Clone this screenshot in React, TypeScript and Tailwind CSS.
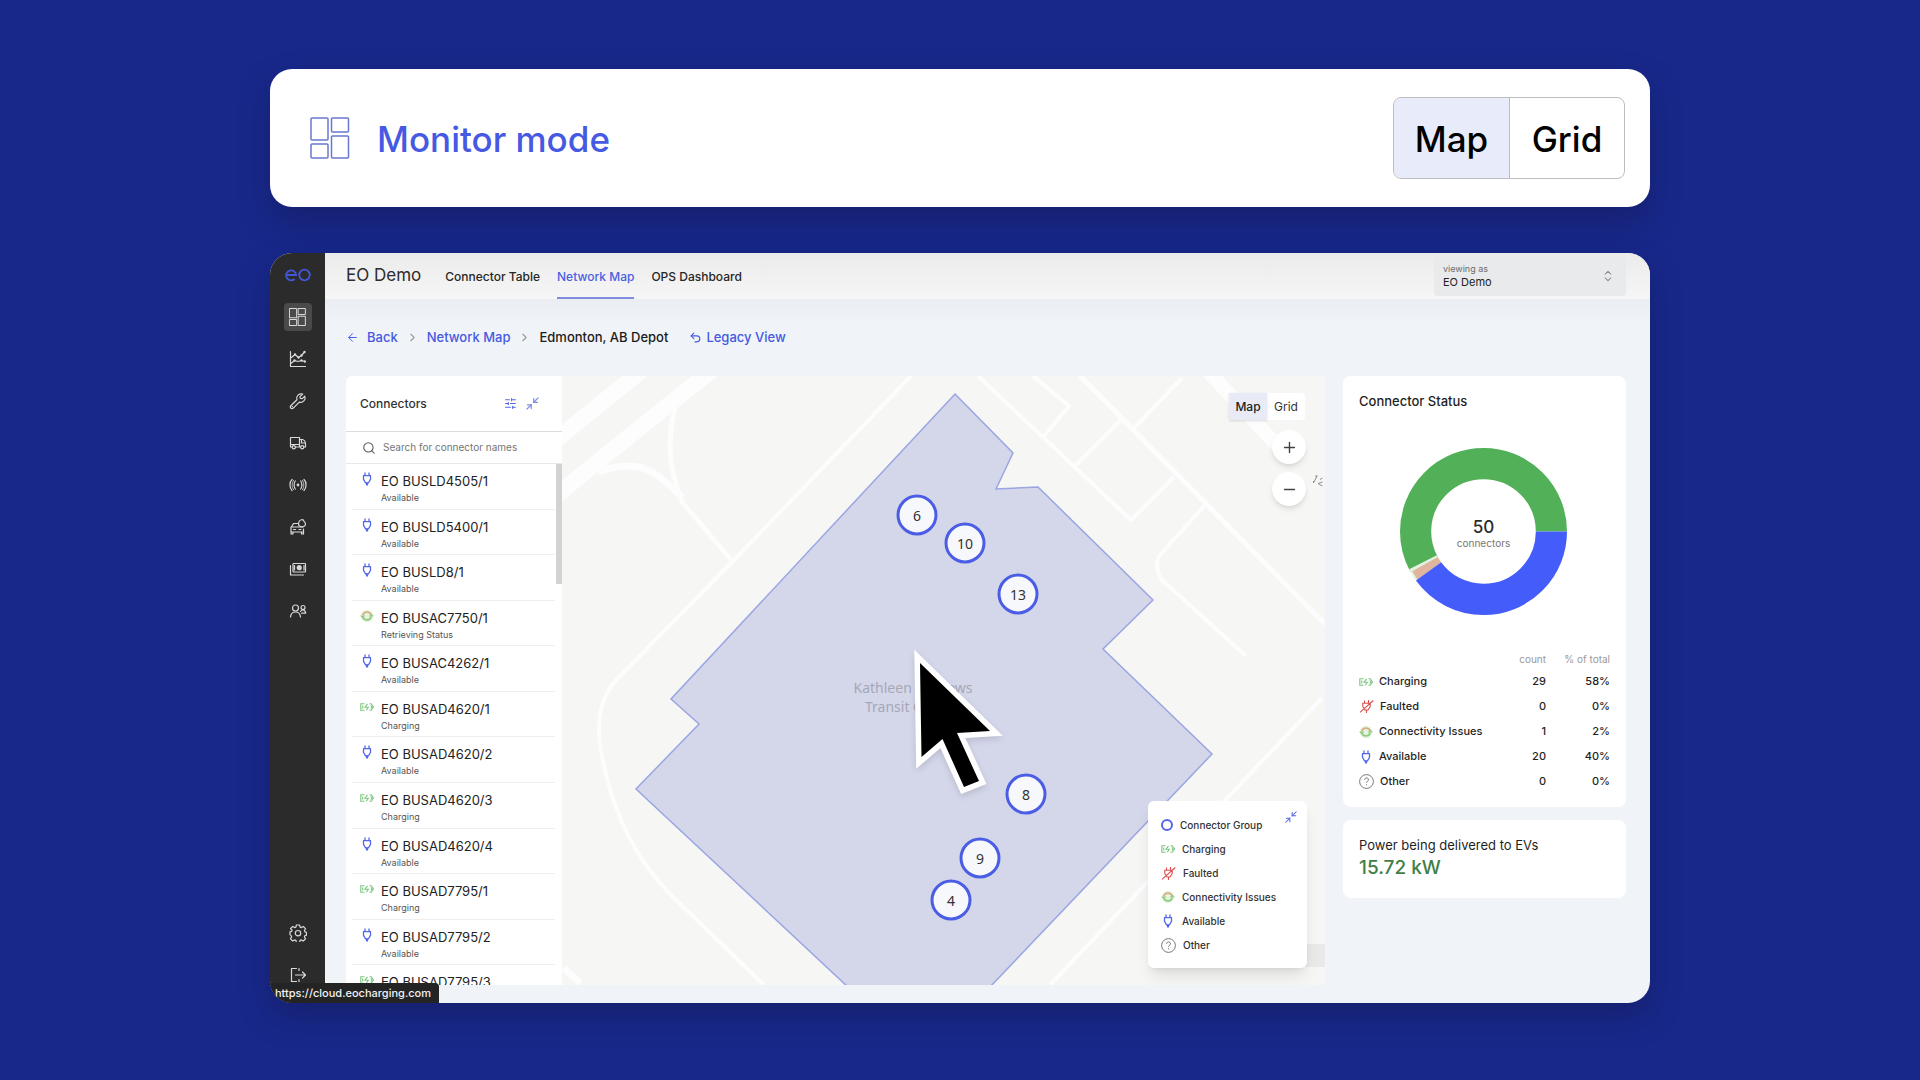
import type { ReactNode } from 'react';
import { ArrowLeft, ChevronRight, ChevronsUpDown, Minimize2, Minus, Plus, Search, SlidersHorizontal, Undo2 } from 'lucide-react';

type Status = 'charging' | 'faulted' | 'connectivity' | 'available' | 'other';

const connectors: { name: string; status: Status; label: string }[] = [
	{ name: 'EO BUSLD4505/1', status: 'available', label: 'Available' },
	{ name: 'EO BUSLD5400/1', status: 'available', label: 'Available' },
	{ name: 'EO BUSLD8/1', status: 'available', label: 'Available' },
	{ name: 'EO BUSAC7750/1', status: 'connectivity', label: 'Retrieving Status' },
	{ name: 'EO BUSAC4262/1', status: 'available', label: 'Available' },
	{ name: 'EO BUSAD4620/1', status: 'charging', label: 'Charging' },
	{ name: 'EO BUSAD4620/2', status: 'available', label: 'Available' },
	{ name: 'EO BUSAD4620/3', status: 'charging', label: 'Charging' },
	{ name: 'EO BUSAD4620/4', status: 'available', label: 'Available' },
	{ name: 'EO BUSAD7795/1', status: 'charging', label: 'Charging' },
	{ name: 'EO BUSAD7795/2', status: 'available', label: 'Available' },
	{ name: 'EO BUSAD7795/3', status: 'charging', label: '' },
];

const totals: { status: Status; label: string; count: number; share: string }[] = [
	{ status: 'charging', label: 'Charging', count: 29, share: '58%' },
	{ status: 'faulted', label: 'Faulted', count: 0, share: '0%' },
	{ status: 'connectivity', label: 'Connectivity Issues', count: 1, share: '2%' },
	{ status: 'available', label: 'Available', count: 20, share: '40%' },
	{ status: 'other', label: 'Other', count: 0, share: '0%' },
];

// pin centres on the map canvas
const groups = [
	{ count: 6, x: 355, y: 139 },
	{ count: 10, x: 403, y: 167 },
	{ count: 13, x: 456, y: 218 },
	{ count: 8, x: 464, y: 418 },
	{ count: 9, x: 418, y: 482 },
	{ count: 4, x: 389, y: 524 },
];

const DashboardIcon = ({ className, strokeWidth = 2 }: { className?: string; strokeWidth?: number }) => (
	<svg className={className} viewBox="0 0 40 42" fill="none" stroke="currentColor" strokeWidth={strokeWidth} aria-hidden="true">
		<rect x="1" y="1" width="17" height="22" rx="1" />
		<rect x="21.5" y="1" width="17" height="14" rx="1" />
		<rect x="1" y="27" width="17" height="14" rx="1" />
		<rect x="21.5" y="19" width="17" height="22" rx="1" />
	</svg>
);

const NavIcon = ({ children }: { children: ReactNode }) => (
	<svg className="size-[18px]" viewBox="0 0 18 18" fill="none" stroke="currentColor" strokeWidth="1.2" strokeLinecap="round" strokeLinejoin="round" aria-hidden="true">
		{children}
	</svg>
);

const ChartIcon = () => (
	<NavIcon>
		<path d="M1.5 1.5v15h15" />
		<path d="M2.5 7.5 6 4.5l3.5 3 3-2 3-3.5M2.5 13l3-2.5 3.5 1 3.5-1 3.5 1" />
		<path d="M15.5 2h.01M6 4.5h.01M9.5 7.5h.01M12.5 5.5h.01M5.5 10.5h.01M12.5 10.5h.01M15.8 11.5h.01" strokeWidth="2.4" />
	</NavIcon>
);

const WrenchIcon = () => (
	<NavIcon>
		<path d="M15.8 4.2 13.2 6.6 11.3 6.3 11 4.6 13.7 2.1A4.5 4.5 0 0 0 7.900 7.700L1.800 13.700a1.700 1.700 0 0 0 2.500 2.500L10.300 10.100A4.500 4.500 0 0 0 15.800 4.200Z" />
		<path d="M3.300 14.700h.01" strokeWidth="1.500" />
	</NavIcon>
);

const VanIcon = () => (
	<NavIcon>
		<path d="M3 13H1.500V3.500h9V13H6.500M10.500 5.500h3c2 .5 3 3 3 4.500v3H15M11.500 13h-1M12.500 5.800V9h3.700M1.500 10.500h9" />
		<circle cx="4.800" cy="13.200" r="1.600" />
		<circle cx="13.200" cy="13.200" r="1.600" />
	</NavIcon>
);

const BroadcastIcon = () => (
	<NavIcon>
		<path d="M3 3.500C.3 6 .3 12 3 14.500M6.300 5c-1.600 2-1.600 6 0 8M15 3.500c2.700 2.500 2.700 8.500 0 11M11.700 5c1.600 2 1.600 6 0 8" />
		<path d="M4.600 4.300c-1.900 2.500-1.900 7 0 9.400M13.400 4.300c1.900 2.500 1.900 7 0 9.400" strokeWidth=".8" />
		<circle cx="9" cy="9" r=".8" fill="currentColor" />
	</NavIcon>
);

const EcoCarIcon = () => (
	<NavIcon>
		<path d="M8.500 5.500H4.500L2.500 9H13.500M2 9v6.500M2 14h12.500V11M2 16h2v-2M12.500 14v2h2v-2M4.500 11.500h2M10 11.500h2" />
		<path d="M9.800 7.500c-1-4 1-6 4.200-6 .3 2 2.500 2.500 2.500 4.500 0 2.500-3.500 4-6.700 1.500Z" />
	</NavIcon>
);

const MoneyIcon = () => (
	<NavIcon>
		<path d="M1.500 5.500v9.500h13" />
		<rect x="4" y="3.500" width="12.500" height="8.500" rx=".5" />
		<path d="M5.500 5.500v4.500M15 5.500v4.500" />
		<circle cx="10.200" cy="7.700" r="2" fill="currentColor" />
	</NavIcon>
);

const PeopleIcon = () => (
	<NavIcon>
		<circle cx="6.500" cy="6" r="3" />
		<path d="M1.500 15c.3-3 2-5 5-5s4.700 2 5 5" />
		<circle cx="14" cy="5.500" r="2" />
		<path d="M11.500 9.500c.7-1.200 1.500-1.500 2.500-1.500 1.700 0 2.500 1.200 2.700 3.200h-4" />
	</NavIcon>
);

const GearIcon = () => (
	<NavIcon>
		<path d="M7.400 1h3.200l.5 2.100 1.300.5 1.900-1.100 2.200 2.200-1.100 1.900.5 1.300 1.600.5v2.700l-1.600.5-.5 1.300 1.100 1.900-2.200 2.200-1.900-1.100-1.300.5-.5 2.100H7.400l-.5-2.100-1.300-.5-1.900 1.100-2.200-2.200 1.100-1.900-.5-1.300L1 10.600V7.900l1.600-.5.500-1.300L1.500 4.700l2.200-2.200 1.900 1.100 1.300-.5Z" />
		<circle cx="9" cy="9.200" r="2.700" />
	</NavIcon>
);

const LogoutIcon = () => (
	<NavIcon>
		<path d="M7.500 2.500H2.500v13h5M10 2.500v2M10 13.500v2M6.500 9h10M13.500 6l3 3-3 3" />
	</NavIcon>
);

const StatusIcon = ({ status }: { status: Status }) => {
	switch (status) {
		case 'charging':
			return (
				<svg className="h-[14px] w-[14px] shrink-0" viewBox="0 0 14 14" fill="none" stroke="#7cc681" strokeWidth="1.1" aria-hidden="true">
					<path d="M4.500 3.800H.8v6.400H4.500M9.500 3.800h1.700L13.500 7l-2.300 3.200H9.500M2.700 5.500v3M10.800 5.500 12 7l-1.200 1.500" />
					<path d="M7.500 3.800 5 7.200h3.400L6.300 10.300" />
				</svg>
			);
		case 'faulted':
			return (
				<svg className="h-[15px] w-[15px] shrink-0" viewBox="0 0 15 15" fill="none" stroke="#d9504c" strokeWidth="1.1" aria-hidden="true">
					<path d="M5.500 1.500v2.500M9.500 1v3M3.800 4.200h7.400v3.300L9 11H6L3.800 7.500ZM7.500 11v3M14.300 1.500 1 13.300" />
				</svg>
			);
		case 'connectivity':
			return (
				<svg className="h-[14px] w-[14px] shrink-0" viewBox="0 0 14 14" fill="none" strokeWidth="1.7" aria-hidden="true">
					<circle cx="7" cy="7" r="6.300" fill="#e6f4de" />
					<path d="M2.800 6.500A4.300 4.300 0 0 1 11.200 6.500" stroke="#d3b184" />
					<path d="M11.200 7.500A4.300 4.300 0 0 1 2.800 7.500" stroke="#8fcb82" />
					<path d="M.8 6.500 2.600 8.400 4.600 6.500M13.200 7.500 11.400 5.600 9.400 7.500" stroke="#8fcb82" strokeWidth="1.100" />
				</svg>
			);
		case 'available':
			return (
				<svg className="h-[14px] w-[14px] shrink-0" viewBox="0 0 14 14" fill="none" stroke="#5468e8" strokeWidth="1.300" aria-hidden="true">
					<path d="M5 .5v3M9 .5v3M3 3.700h8M3.500 3.700v3.600L5.500 10.800h3L10.500 7.300V3.700" />
					<path d="M7 10.500v3" strokeWidth="2.200" />
				</svg>
			);
		default:
			return (
				<svg className="h-[15px] w-[15px] shrink-0" viewBox="0 0 15 15" fill="none" stroke="#6b6b6b" strokeWidth=".9" aria-hidden="true">
					<circle cx="7.500" cy="7.500" r="6.900" />
					<path d="M5.600 5.800c0-2.500 3.900-2.500 3.900 0 0 1.500-2 1.400-2 3M7.500 10.300v1.100" />
				</svg>
			);
	}
};

const navItems = [
	{ label: 'Dashboard', icon: <DashboardIcon className="h-[18px] w-[17px]" strokeWidth={2.4} />, active: true },
	{ label: 'Reports', icon: <ChartIcon /> },
	{ label: 'Maintenance', icon: <WrenchIcon /> },
	{ label: 'Vehicles', icon: <VanIcon /> },
	{ label: 'Network', icon: <BroadcastIcon /> },
	{ label: 'Energy', icon: <EcoCarIcon /> },
	{ label: 'Billing', icon: <MoneyIcon /> },
	{ label: 'Users', icon: <PeopleIcon /> },
];

const Sidebar = () => (
	<aside className="flex w-[55px] shrink-0 flex-col items-center bg-[#2b2b2b] text-[#d9d9d9]">
		<a href="#home" aria-label="EO home" className="mt-[15px]">
			<svg className="h-[14px] w-[26px]" viewBox="0 0 26 14" fill="none" stroke="#4356d6" strokeWidth="1.800" aria-hidden="true">
				<path d="M1.500 7h9.600A5 5 0 1 0 9.500 11" />
				<circle cx="19.500" cy="7" r="5.300" />
			</svg>
		</a>
		<nav className="mt-[21px] flex flex-col gap-[14px]" aria-label="Main">
			{navItems.map((item) => (
				<a
					key={item.label}
					href={'#' + item.label.toLowerCase()}
					aria-label={item.label}
					className={item.active ? 'grid size-[28px] place-items-center rounded-sm bg-[#4a4a4a]' : 'grid size-[28px] place-items-center'}
				>
					{item.icon}
				</a>
			))}
		</nav>
		<div className="mt-auto mb-[14px] flex flex-col gap-[14px]">
			<a href="#settings" aria-label="Settings" className="grid size-[28px] place-items-center"><GearIcon /></a>
			<a href="#logout" aria-label="Log out" className="grid size-[28px] place-items-center"><LogoutIcon /></a>
		</div>
	</aside>
);

const TopBar = () => (
	<header className="flex h-[46px] items-center bg-linear-to-b from-[#ebebeb] to-[#f6f6f6] pr-[24px] pl-[21px]">
		<h2 className="mr-[24px] text-[17px] text-[#2c2c2c]">EO Demo</h2>
		<nav className="flex h-full items-stretch gap-[17px] text-[12px] font-medium text-[#262626]" aria-label="Views">
			<a href="#table" className="flex items-center border-b-2 border-transparent pt-[3px]">Connector Table</a>
			<a href="#map" className="flex items-center border-b-2 border-[#7f8ce0] pt-[3px] text-[#4a5fe0]">Network Map</a>
			<a href="#ops" className="flex items-center border-b-2 border-transparent pt-[3px]">OPS Dashboard</a>
		</nav>
		<div className="relative ml-auto flex h-[40px] w-[192px] flex-col justify-center rounded-sm bg-[#e8eaec] px-[9px]">
			<label htmlFor="account" className="text-[9px] leading-[12px] text-[#6d6d6d]">viewing as</label>
			<select id="account" className="w-full appearance-none bg-transparent text-[11px] leading-[14px] text-[#222]">
				<option>EO Demo</option>
			</select>
			<ChevronsUpDown className="pointer-events-none absolute top-[13px] right-[11px] size-[14px] text-[#8a8a8a]" strokeWidth={1.8} />
		</div>
	</header>
);

const ConnectorList = () => (
	<section className="relative flex w-[216px] shrink-0 flex-col overflow-hidden rounded-tl-md bg-white">
		<div className="flex h-[56px] items-center border-b border-[#dcdcdc] px-[14px]">
			<h3 className="text-[12px] font-medium text-[#333]">Connectors</h3>
			<button type="button" aria-label="Filter" className="ml-auto text-[#5468e6]"><SlidersHorizontal className="size-[13px]" /></button>
			<button type="button" aria-label="Collapse list" className="mr-[8px] ml-[8px] text-[#7f8ce6]"><Minimize2 className="size-[15px]" strokeWidth={2} /></button>
		</div>
		<div className="flex h-[32px] items-center border-b border-[#e8e8e8] pr-[14px] pl-[16px]">
			<Search className="size-[14px] shrink-0 text-[#555]" strokeWidth={1.8} />
			<input
				type="search"
				aria-label="Search for connector names"
				placeholder="Search for connector names"
				className="ml-[7px] w-full bg-transparent text-[10px] outline-none placeholder:text-[#757575]"
			/>
		</div>
		{/* twelve rows, the last one runs out of the panel */}
		<div className="min-h-0 flex-1 overflow-hidden">
			<ul className="flex h-[547px] flex-col pr-[7px] pl-[6px]">
				{connectors.map((c) => (
					<li key={c.name} className="flex flex-1 gap-[7px] border-b border-[#efefef] pt-[8px] pl-[8px]">
						<StatusIcon status={c.status} />
						<div>
							<p className="text-[13px] leading-[18px] text-[#222]">{c.name}</p>
							<p className="text-[9px] leading-[16px] text-[#555]">{c.label}</p>
						</div>
					</li>
				))}
			</ul>
		</div>
		<div className="absolute top-[88px] right-0 h-[120px] w-[6px] bg-[#d2d2d2]" />
	</section>
);

const Legend = () => (
	<div className="absolute right-[18px] bottom-[17px] w-[159px] rounded-md bg-white pt-[12px] pr-[12px] pb-[11px] pl-[13px] text-[10px] font-medium text-[#333] shadow-lg">
		<button type="button" aria-label="Collapse legend" className="absolute top-[9px] right-[9px] text-[#5468e6]"><Minimize2 className="size-[14px]" strokeWidth={1.8} /></button>
		<ul>
			<li className="flex h-[24px] items-center gap-[7px]">
				<span className="size-[12px] rounded-full border-2 border-[#5468e6]" />
				Connector Group
			</li>
			{totals.map((t) => (
				<li key={t.label} className="flex h-[24px] items-center gap-[7px]">
					<StatusIcon status={t.status} />
					{t.label}
				</li>
			))}
		</ul>
	</div>
);

const NetworkMap = () => (
	<section className="relative min-w-0 flex-1 bg-[#f6f6f4]" aria-label="Edmonton, AB Depot map">
		<svg className="block size-full" viewBox="0 0 763 609" preserveAspectRatio="xMinYMin slice" fill="none" aria-hidden="true">
			<g stroke="#fdfdfd" strokeLinejoin="round">
				<path d="M-6 64 80 -6" strokeWidth="16" />
				<path d="M-6 120 50 74 150 -6" strokeWidth="16" />
				<path d="M116 20C104 60 106 90 120 126L171 186" strokeWidth="5" />
				<path d="M36 96C70 84 90 88 120 122" strokeWidth="7" />
				<path d="M349 0 173 183 56 302C34 325 34 355 41 385 52 440 76 486 110 520L202 609" strokeWidth="4" />
				<path d="M416 0 569 144 612 101M471 0 507 30 482 60M559 44 514 89M620 2 572 52M643 129 597 180Q592 192 600 204L684 280" strokeWidth="4" />
				<path d="M518 0 763 248" strokeWidth="5" />
				<path d="M645-6 725 80" strokeWidth="14" />
				<path d="M760 322 488 609" strokeWidth="4" />
				<path d="M2 592 18 607" strokeWidth="7" />
			</g>
			<path d="M393 18 451 77 434 113 476 111 591 224 541 273 650 378 427 612H287L74 413 137 348 109 323Z" fill="#d4d7ea" stroke="#9aa5e2" strokeWidth="1.500" />
		</svg>

		<p className="absolute top-[302px] left-[351px] w-[160px] -translate-x-1/2 text-center font-['Noto_Sans','Open_Sans',sans-serif] text-[14px] leading-[19px] text-[#a4a7b6]">
			Kathleen Andrews Transit Garage
		</p>

		{groups.map((g) => (
			<button
				key={g.count}
				type="button"
				className="absolute grid size-[41px] -translate-1/2 place-items-center rounded-full border-[3px] border-[#4a5de4] bg-[#f6f8fb] font-['Noto_Sans','Open_Sans',sans-serif] text-[14px] text-[#333]"
				style={{ left: g.x, top: g.y }}
			>
				{g.count}
			</button>
		))}

		<svg className="absolute top-[268px] left-[345px] h-[160px] w-[105px] drop-shadow-md" viewBox="0 0 105 160" aria-hidden="true">
			<path
				d="M13 19 14.500 113 35.500 95 57 143 72 137 50 89 83 87Z"
				fill="#000"
				stroke="#fff"
				strokeWidth="11"
				strokeMiterlimit="6"
				paintOrder="stroke"
			/>
		</svg>

		<div className="absolute top-[17px] right-[20px] flex rounded-sm bg-white text-[12px] leading-[27px] text-[#333]">
			<button type="button" aria-pressed="true" className="w-[38px] bg-[#e8ebf6] font-medium text-[#222] shadow-sm">Map</button>
			<button type="button" aria-pressed="false" className="w-[38px]">Grid</button>
		</div>
		<div className="absolute top-[54px] right-[19px] flex flex-col gap-[8px] text-[#444]">
			<button type="button" aria-label="Zoom in" className="grid size-[34px] place-items-center rounded-full bg-white shadow-md"><Plus className="size-[17px]" /></button>
			<button type="button" aria-label="Zoom out" className="grid size-[34px] place-items-center rounded-full bg-white shadow-md"><Minus className="size-[17px]" /></button>
		</div>
		<svg className="absolute top-[98px] right-0 size-[13px]" viewBox="0 0 13 13" fill="none" stroke="#8f8f8f" aria-hidden="true">
			<path d="M2 8 5 2M3 2h2.500M8 5.500 10.500 4M10.500 8 6 9.500l4.500 2.500M1.500 7v2" />
		</svg>

		<div className="absolute right-0 bottom-[18px] h-[23px] w-[40px] bg-[#e9e9e7]" />
		<Legend />
	</section>
);

const Donut = () => (
	<svg className="block size-[167px]" viewBox="-83 -83 166 166" role="img" aria-label="50 connectors">
		<g fill="none" strokeWidth="31">
			{/* pathLength 100 lets the dashes be read as percentages */}
			<circle r="67.500" stroke="#52b158" pathLength="100" strokeDasharray="58 42" strokeDashoffset="-42" />
			<circle r="67.500" stroke="#e3f1e1" pathLength="100" strokeDasharray="2.500 97.500" strokeDashoffset="-40" />
			<circle r="66.500" stroke="#dfb59d" strokeWidth="29" pathLength="100" strokeDasharray="1.900 98.100" strokeDashoffset="-40" />
			<circle r="67.500" stroke="#445dfa" pathLength="100" strokeDasharray="40 60" />
		</g>
		<text y="1" textAnchor="middle" className="fill-[#2b2b2b] text-[17px] font-medium">50</text>
		<text y="15" textAnchor="middle" className="fill-[#777] text-[10px]">connectors</text>
	</svg>
);

const StatusPanel = () => (
	<div className="ml-[18px] w-[283px] shrink-0 text-[#1f1f1f]">
		<section className="h-[431px] rounded-lg bg-white px-[16px] pt-[16px]">
			<h3 className="text-[13px] leading-[18px] font-medium">Connector Status</h3>
			<div className="mt-[38px] flex justify-center pr-[2px]"><Donut /></div>
			<table className="mt-[34px] w-full text-[11px] font-medium">
				<thead>
					<tr className="h-[20px] text-[10px] text-[#999]">
						<th aria-label="Status" />
						<th className="text-right font-normal">count</th>
						<th className="w-[64px] text-right font-normal">% of total</th>
					</tr>
				</thead>
				<tbody>
					{totals.map((t) => (
						<tr key={t.label} className="h-[25px]">
							<td><span className="flex items-center gap-[6px]"><StatusIcon status={t.status} />{t.label}</span></td>
							<td className="text-right">{t.count}</td>
							<td className="text-right">{t.share}</td>
						</tr>
					))}
				</tbody>
			</table>
		</section>
		<section className="mt-[13px] h-[78px] rounded-lg bg-white px-[16px] pt-[16px]">
			<h3 className="text-[13px] leading-[18px]">Power being delivered to EVs</h3>
			<p className="text-[19px] leading-[28px] font-medium text-[#3f7f45]">15.72 kW</p>
		</section>
	</div>
);

const App = () => {
	return (
		<main className="min-h-screen bg-[#18288a] px-4 pt-[69px] pb-[77px] font-[Inter,sans-serif]">
			<div className="mx-auto flex max-w-[1380px] flex-col gap-[46px]">
				<section className="flex h-[138px] items-center rounded-[22px] bg-white pr-[25px] pl-[40px] shadow-[0_14px_30px_rgba(20,25,80,0.45)]">
					<DashboardIcon className="h-[42px] w-[40px] text-[#6a78cf]" strokeWidth={1.5} />
					<h1 className="ml-[27px] pt-[2px] text-[35px] font-medium text-[#4659e2]">Monitor mode</h1>
					<div className="ml-auto flex h-[82px] overflow-hidden rounded-lg border border-[#bdbdbd] text-[35px] font-medium text-black">
						<button type="button" aria-pressed="true" className="w-[116px] border-r border-[#bdbdbd] bg-[#e8ecfa] pt-[2px]">Map</button>
						<button type="button" aria-pressed="false" className="w-[114px] pt-[2px]">Grid</button>
					</div>
				</section>

				<section className="relative flex overflow-hidden rounded-[22px] bg-[#f0f4f8] shadow-[0_14px_30px_rgba(20,25,80,0.45)]">
					<Sidebar />
					<div className="min-w-0 flex-1">
						<TopBar />
						<nav className="flex h-[77px] items-center bg-linear-to-b from-[#eaedf1] to-[#f0f4f8] to-30% pl-[21px] text-[13px] font-medium text-[#4659e2]" aria-label="Breadcrumb">
							<a href="#back" className="flex items-center gap-[8px]"><ArrowLeft className="size-[13px]" strokeWidth={1.8} />Back</a>
							<ChevronRight className="mx-[8px] size-[13px] text-[#999]" />
							<a href="#network-map">Network Map</a>
							<ChevronRight className="mx-[8px] size-[13px] text-[#999]" />
							<span className="text-[#1c1c1c]">Edmonton, AB Depot</span>
							<a href="#legacy" className="ml-[21px] flex items-center gap-[4px]"><Undo2 className="size-[13px]" />Legacy View</a>
						</nav>
						<div className="mb-[18px] flex h-[609px] pr-[24px] pl-[21px]">
							<ConnectorList />
							<NetworkMap />
							<StatusPanel />
						</div>
					</div>
					<div className="absolute bottom-0 left-0 h-[20px] rounded-tr-sm bg-[#242424] pr-[8px] pl-[5px] text-[11px] leading-[20px] font-medium text-[#f2f2f2]">
						https://cloud.eocharging.com
					</div>
				</section>
			</div>
		</main>
	);
};

export default App;
